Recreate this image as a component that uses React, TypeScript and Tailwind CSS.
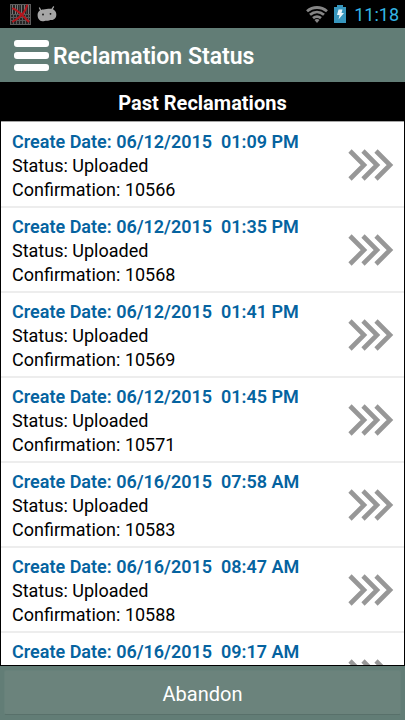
const records = [
  { date: '06/12/2015', time: '01:09 PM', status: 'Uploaded', confirmation: '10566' },
  { date: '06/12/2015', time: '01:35 PM', status: 'Uploaded', confirmation: '10568' },
  { date: '06/12/2015', time: '01:41 PM', status: 'Uploaded', confirmation: '10569' },
  { date: '06/12/2015', time: '01:45 PM', status: 'Uploaded', confirmation: '10571' },
  { date: '06/16/2015', time: '07:58 AM', status: 'Uploaded', confirmation: '10583' },
  { date: '06/16/2015', time: '08:47 AM', status: 'Uploaded', confirmation: '10588' },
  { date: '06/16/2015', time: '09:17 AM', status: '', confirmation: '' },
];

function ScannerIcon() {
  return (
    <svg width="21" height="21" viewBox="0 0 21 21" aria-hidden="true">
      <rect x="0.5" y="0.5" width="20" height="20" fill="#252525" stroke="#5c5c5c" />
      <path d="M2.5 1v9M5.5 1v9M7.5 1v9M11.5 1v9M14.5 1v9M18.5 1v9" stroke="#777" />
      <path d="M9.5 1v9M16.5 1v9" stroke="#444" />
      <path d="M1 10.5h19M1 13.5h19M1 16.5h19M3.5 11v9M6.5 11v9M9.5 11v9M12.5 11v9M15.5 11v9M18.5 11v9" stroke="#5a5a5a" />
      <path d="M3 4.500c5 2 10 7 15.500 13M17 1.500c-1 6-7 12-14 16" fill="none" stroke="#b3151c" strokeWidth="2" strokeLinecap="round" />
    </svg>
  );
}

function DroidIcon() {
  return (
    <svg width="20" height="16" viewBox="0 0 20 16" aria-hidden="true">
      <path d="M4 5 2.500 2M14.500 4 16.500 0.900" stroke="#a6a6a6" strokeWidth="1.300" strokeLinecap="round" />
      <path d="M.6 9C.6 5.500 3 3.600 6.500 3.500c2 0 4-.7 6.500-.7 3.500 0 6 2 6.300 5.200.3 3.500-1.800 6-4.800 6-1.800 0-3 .8-5 .8-1.800 0-2.500.7-4.300.5C2.500 15 .6 12.500.6 9Z" fill="#a6a6a6" />
      <circle cx="6" cy="8.500" r="0.900" fill="#111" />
      <circle cx="13.500" cy="7.800" r="0.900" fill="#111" />
    </svg>
  );
}

function WifiIcon() {
  return (
    <svg width="22" height="17" viewBox="0 0 22 17" aria-hidden="true">
      <g fill="none" stroke="#858585" strokeWidth="2.800">
        <path d="M1 5.300C7 .2 15 .2 21 5.300" />
        <path d="M4 8.800c4.200-3.600 9.800-3.600 14 0" />
        <path d="M7 12.200c2.500-2 5.500-2 8 0" />
      </g>
      <path d="M8.500 14c1.500-1.200 3.500-1.200 5 0L11 17Z" fill="#858585" />
    </svg>
  );
}

function BatteryIcon() {
  return (
    <svg width="12" height="18" viewBox="0 0 12 18" aria-hidden="true">
      <path d="M0 2h3V0h6v2h3v16H0Z" fill="#3796bd" />
      <path d="M4.500 4.500h4L7.500 8H10l-5.500 6.500 1-4.500H3Z" fill="#e8f5fa" />
    </svg>
  );
}

function Chevrons() {
  return (
    <svg className="shrink-0" width="46" height="32" viewBox="0 0 46 32" fill="none" stroke="#979797" strokeWidth="4.600" aria-hidden="true">
      <path d="M2 2l14 14L2 30M15 2l14 14L15 30M28 2l14 14L28 30" />
    </svg>
  );
}

export default function App() {
  return (
    <div className="flex h-screen flex-col bg-[#627d76] font-['Roboto','Liberation_Sans',sans-serif]">
      <div className="flex h-7 shrink-0 items-center justify-between bg-black pr-1.5 pl-2.5">
        <div className="flex items-center gap-1.5">
          <ScannerIcon />
          <DroidIcon />
        </div>
        <div className="flex items-center gap-1.5">
          <WifiIcon />
          <BatteryIcon />
          <time className="pt-px pl-0.5 text-lg leading-7 text-[#33b5e5]">11:18</time>
        </div>
      </div>

      <header className="flex h-[54px] shrink-0 items-center gap-1 pl-3.5">
        <button type="button" aria-label="Menu" className="flex w-[35px] flex-col gap-[5px]">
          <span className="h-[7px] w-full rounded-[3px] bg-white" />
          <span className="h-[7px] w-full rounded-[3px] bg-white" />
          <span className="h-[7px] w-full rounded-[3px] bg-white" />
        </button>
        <h1 className="pt-1 text-[23px] leading-7 font-semibold text-white">Reclamation Status</h1>
      </header>

      <main className="flex min-h-0 flex-1 flex-col border border-black bg-white">
        <h2 className="h-[39px] shrink-0 border-b border-[#a5a5a5] bg-black pt-1.5 text-center text-[20px] leading-7 font-bold text-white">
          Past Reclamations
        </h2>
        <ul className="min-h-0 flex-1 overflow-hidden pt-px">
          {records.map((r) => (
            <li key={r.time} className="flex h-[85px] items-center justify-between border-b-2 border-[#ededed] pr-2.5 pl-[11px]">
              <div className="h-full pt-[7px] text-lg leading-6 text-black">
                <p className="font-semibold whitespace-pre text-[#0563a0]">{`Create Date: ${r.date}  ${r.time}`}</p>
                {r.status && <p>Status: {r.status}</p>}
                {r.confirmation && <p>Confirmation: {r.confirmation}</p>}
              </div>
              <Chevrons />
            </li>
          ))}
        </ul>
      </main>

      <footer className="flex h-[54px] shrink-0 px-1 pt-1 pb-[5px]">
        <button type="button" className="flex-1 rounded-xs border border-[#67817a] border-b-[#58706a] bg-[#6b837c] pt-0.5 text-xl leading-6 text-white">
          Abandon
        </button>
      </footer>
    </div>
  );
}
